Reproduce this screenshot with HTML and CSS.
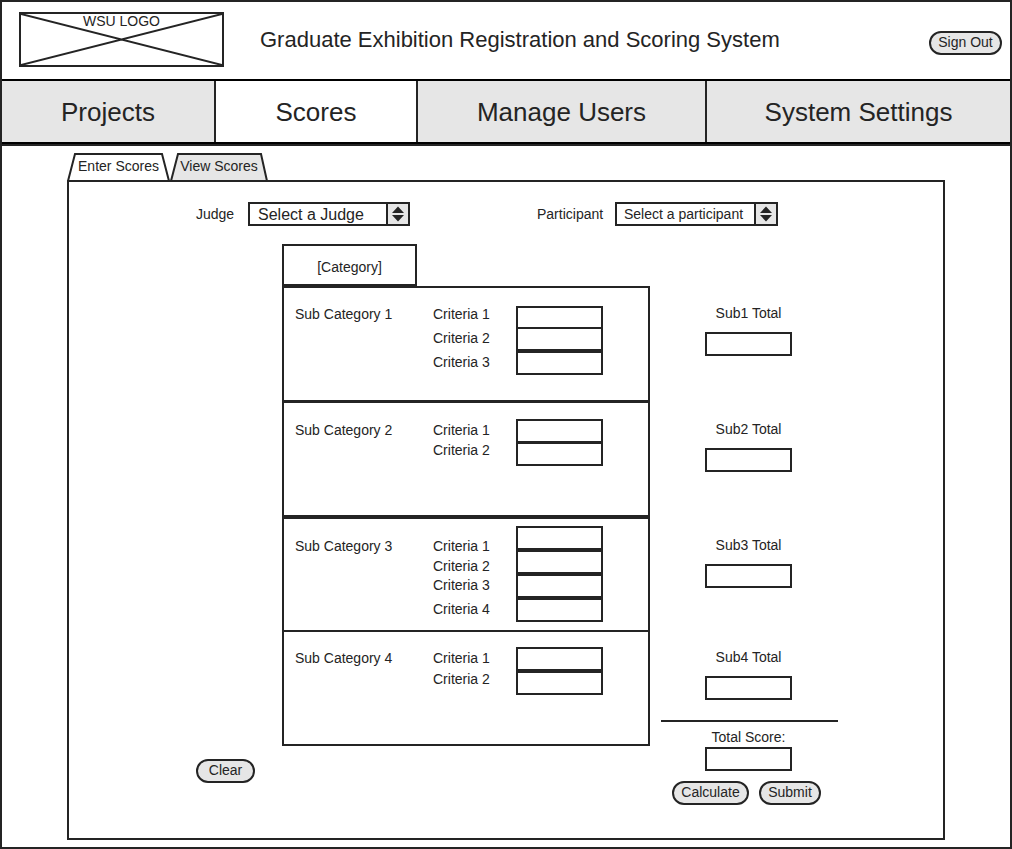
FILE: index.html
```html
<!DOCTYPE html>
<html lang="en">
<head>
<meta charset="utf-8">
<title>Graduate Exhibition Registration and Scoring System</title>
<link rel="stylesheet" href="styles.css">
</head>
<body class="page">
<header class="header">
  <div class="logo">
    <svg class="logo-cross" viewBox="0 0 201 51" preserveAspectRatio="none" aria-hidden="true"><path d="M0 0L201 51M201 0L0 51"/></svg>
    <span class="logo-text">WSU LOGO</span>
  </div>
  <h1 class="title">Graduate Exhibition Registration and Scoring System</h1>
  <button class="pill sign-out" type="button">Sign Out</button>
</header>
<nav class="nav">
  <a class="nav-item nav-projects" href="#projects">Projects</a>
  <a class="nav-item nav-scores" href="#scores" aria-current="page">Scores</a>
  <a class="nav-item nav-users" href="#users">Manage Users</a>
  <a class="nav-item nav-settings" href="#settings">System Settings</a>
</nav>
<main class="main">
  <div class="tabs">
    <button class="tab tab-enter" type="button">
      <svg class="tab-shape" viewBox="0 0 103 28" aria-hidden="true"><path d="M1 28L8 1H95L102 28"/></svg>
      <span class="tab-text">Enter Scores</span>
    </button>
    <button class="tab tab-view" type="button">
      <svg class="tab-shape" viewBox="0 0 98 28" aria-hidden="true"><path d="M1 28L8 1H91L97 28"/></svg>
      <span class="tab-text">View Scores</span>
    </button>
  </div>
  <form class="panel">
    <div class="pickers">
      <label class="picker-label judge-label" for="judge">Judge</label>
      <div class="picker">
        <select class="select select-large" id="judge"><option>Select a Judge</option></select>
        <svg class="picker-arrows" viewBox="0 0 24 24" aria-hidden="true"><path class="arrow-box" d="M1 1H23V23H1Z"/><path class="arrow" d="M6 11L12 4.500L18 11ZM6 13H18L12 19.500Z"/></svg>
      </div>
      <label class="picker-label participant-label" for="participant">Participant</label>
      <div class="picker picker-wide">
        <select class="select" id="participant"><option>Select a participant</option></select>
        <svg class="picker-arrows" viewBox="0 0 24 24" aria-hidden="true"><path class="arrow-box" d="M1 1H23V23H1Z"/><path class="arrow" d="M6 11L12 4.500L18 11ZM6 13H18L12 19.500Z"/></svg>
      </div>
    </div>
    <div class="board">
      <button class="pill clear" type="reset">Clear</button>
      <div class="sheet">
        <div class="category">[Category]</div>
        <div class="groups">
          <section class="group group-1">
            <h2 class="group-name">Sub Category 1</h2>
            <div class="labels">
              <label for="c11">Criteria 1</label><label for="c12">Criteria 2</label><label for="c13">Criteria 3</label>
            </div>
            <div class="fields">
              <input class="box" id="c11" type="text"><input class="box" id="c12" type="text"><input class="box" id="c13" type="text">
            </div>
          </section>
          <section class="group group-2">
            <h2 class="group-name">Sub Category 2</h2>
            <div class="labels">
              <label for="c21">Criteria 1</label><label for="c22">Criteria 2</label>
            </div>
            <div class="fields">
              <input class="box" id="c21" type="text"><input class="box" id="c22" type="text">
            </div>
          </section>
          <section class="group group-3">
            <h2 class="group-name">Sub Category 3</h2>
            <div class="labels">
              <label for="c31">Criteria 1</label><label for="c32">Criteria 2</label><label for="c33">Criteria 3</label><label for="c34">Criteria 4</label>
            </div>
            <div class="fields">
              <input class="box" id="c31" type="text"><input class="box" id="c32" type="text"><input class="box" id="c33" type="text"><input class="box" id="c34" type="text">
            </div>
          </section>
          <section class="group group-4">
            <h2 class="group-name">Sub Category 4</h2>
            <div class="labels">
              <label for="c41">Criteria 1</label><label for="c42">Criteria 2</label>
            </div>
            <div class="fields">
              <input class="box" id="c41" type="text"><input class="box" id="c42" type="text">
            </div>
          </section>
        </div>
      </div>
      <div class="totals">
        <div class="total"><label for="t1">Sub1 Total</label><input class="box" id="t1" type="text"></div>
        <div class="total"><label for="t2">Sub2 Total</label><input class="box" id="t2" type="text"></div>
        <div class="total"><label for="t3">Sub3 Total</label><input class="box" id="t3" type="text"></div>
        <div class="total total-last"><label for="t4">Sub4 Total</label><input class="box" id="t4" type="text"></div>
        <div class="grand"><label for="total">Total Score:</label><input class="box" id="total" type="text"></div>
        <div class="actions">
          <button class="pill calculate" type="button">Calculate</button>
          <button class="pill submit" type="submit">Submit</button>
        </div>
      </div>
    </div>
  </form>
</main>
</body>
</html>
```
FILE: styles.css
```css
:root {
  --ink: #242424;
  --fill: #e6e6e6;
}

* { box-sizing: border-box; }

.page {
  margin: 0;
  min-height: 100vh;
  display: flex;
  flex-direction: column;
  border: 2px solid var(--ink);
  background: #fff;
  color: var(--ink);
  font: 14px/20px "Liberation Sans", Arial, sans-serif;
}

button, input, select {
  margin: 0;
  color: inherit;
  font: inherit;
}

.header {
  display: flex;
  align-items: center;
  padding: 10px 8px 12px 17px;
}

.logo {
  position: relative;
  width: 205px;
  height: 55px;
  border: 2px solid var(--ink);
  text-align: center;
  line-height: 14px;
}

.logo-cross {
  position: absolute;
  inset: 0;
  width: 100%;
  height: 100%;
  stroke: var(--ink);
  stroke-width: 2;
}

.logo-text { position: relative; }

.title {
  flex: 1;
  margin: 0 0 0 36px;
  font-size: 22px;
  line-height: 26px;
  font-weight: 400;
}

.pill {
  height: 24px;
  padding: 0 0 2px;
  border: 2px solid var(--ink);
  border-radius: 12px;
  background: var(--fill);
  line-height: 18px;
  text-align: center;
}

.sign-out { width: 73px; margin-top: 6px; }

.nav {
  display: flex;
  margin: 0 -2px;
  border: 2px solid #000;
}

.nav-item {
  padding-top: 2px;
  background: var(--fill);
  color: inherit;
  font-size: 26px;
  line-height: 59px;
  text-align: center;
  text-decoration: none;
  white-space: nowrap;
}

.nav-item + .nav-item { border-left: 2px solid var(--ink); }
.nav-projects { flex: 212 1 0; }
.nav-scores { flex: 200 1 0; background: #fff; }
.nav-users { flex: 287 1 0; }
.nav-settings { flex: 303 1 0; }

.main {
  flex: 1;
  display: flex;
  flex-direction: column;
  padding: 7px 65px;
  border-top: 2px solid var(--ink);
}

.tabs { display: flex; }

.tab {
  position: relative;
  height: 27px;
  padding: 0 0 2px;
  border: 0;
  background: none;
}

.tab-enter { width: 103px; fill: #fff; }
.tab-view { width: 98px; fill: var(--fill); }

.tab-shape {
  position: absolute;
  top: 0;
  left: 0;
  width: 100%;
  height: 28px;
  stroke: var(--ink);
  stroke-width: 2;
}

.tab-text { position: relative; }

.panel {
  position: relative;
  flex: 1;
  padding: 20px 0 33px 127px;
  border: 2px solid var(--ink);
}

.pickers { display: flex; align-items: center; }
.judge-label { width: 52px; }
.participant-label { width: 78px; margin-left: 127px; }

.picker {
  position: relative;
  width: 162px;
  height: 24px;
}

.picker-wide { width: 163px; }

.select {
  appearance: none;
  width: 100%;
  height: 24px;
  padding: 0 24px 2px 7px;
  border: 2px solid var(--ink);
  border-radius: 0;
  background: #fff;
}

.select-large {
  padding: 1px 24px 0 8px;
  font-size: 16px;
}

.picker-arrows {
  position: absolute;
  top: 0;
  right: 0;
  width: 24px;
  height: 24px;
  pointer-events: none;
}

.arrow-box { fill: var(--fill); stroke: var(--ink); stroke-width: 2; }
.arrow { fill: var(--ink); }

.board {
  display: grid;
  grid-template-columns: 86px 368px 188px;
  margin-top: 18px;
}

.clear {
  align-self: end;
  width: 59px;
  margin-bottom: 22px;
}

.category {
  width: 135px;
  height: 42px;
  padding-top: 2px;
  border: 2px solid var(--ink);
  line-height: 38px;
  text-align: center;
}

.groups { border: 2px solid var(--ink); }

.group {
  display: grid;
  grid-template-columns: 138px 83px 87px;
  align-items: start;
  height: 115px;
  padding-left: 11px;
  border-bottom: 3px solid var(--ink);
}

.group-name {
  margin: 16px 0 0;
  font-size: 14px;
  line-height: 20px;
  font-weight: 400;
}

.labels {
  display: grid;
  grid-auto-rows: 20px;
  align-items: end;
  margin-top: 16px;
}

.fields {
  display: grid;
  grid-auto-rows: 24px;
  margin-top: 16px;
}

.box {
  width: 87px;
  height: 24px;
  padding: 0 6px;
  border: 2px solid var(--ink);
  border-radius: 0;
  background: #fff;
}

.group-1 .labels { grid-template-rows: 20px 24px 24px; }
.group-1 .fields { grid-template-rows: 21px 24px 24px; margin-top: 18px; }

.group-2 { height: 116px; border-bottom-width: 4px; }
.group-2 .fields { grid-template-rows: 23px 24px; }
.group-2 .group-name, .group-2 .labels,
.group-3 .group-name, .group-3 .labels { margin-top: 17px; }

.group-3 { height: 113px; border-bottom-width: 2px; }
.group-3 .labels { grid-template-rows: 20px 20px 19px 24px; }
.group-3 .fields { margin-top: 7px; }

.group-4 { height: 112px; border-bottom: 0; }
.group-4 .labels { grid-template-rows: 20px 21px; }
.group-4 .fields { margin-top: 15px; }

.totals { margin: 42px 0 0 11px; }

.total {
  display: flex;
  flex-direction: column;
  align-items: center;
  gap: 9px;
  height: 116px;
  padding: 17px 2px 0 0;
}

.total-last {
  height: 88px;
  padding-top: 13px;
}

.total, .grand { width: 177px; }

.grand {
  display: flex;
  flex-direction: column;
  align-items: center;
  padding: 5px 2px 0 0;
}

.total-last { border-bottom: 2px solid var(--ink); }

.actions {
  display: flex;
  gap: 10px;
  padding: 10px 0 0 11px;
}

.calculate { width: 77px; }
.submit { width: 62px; }
```
